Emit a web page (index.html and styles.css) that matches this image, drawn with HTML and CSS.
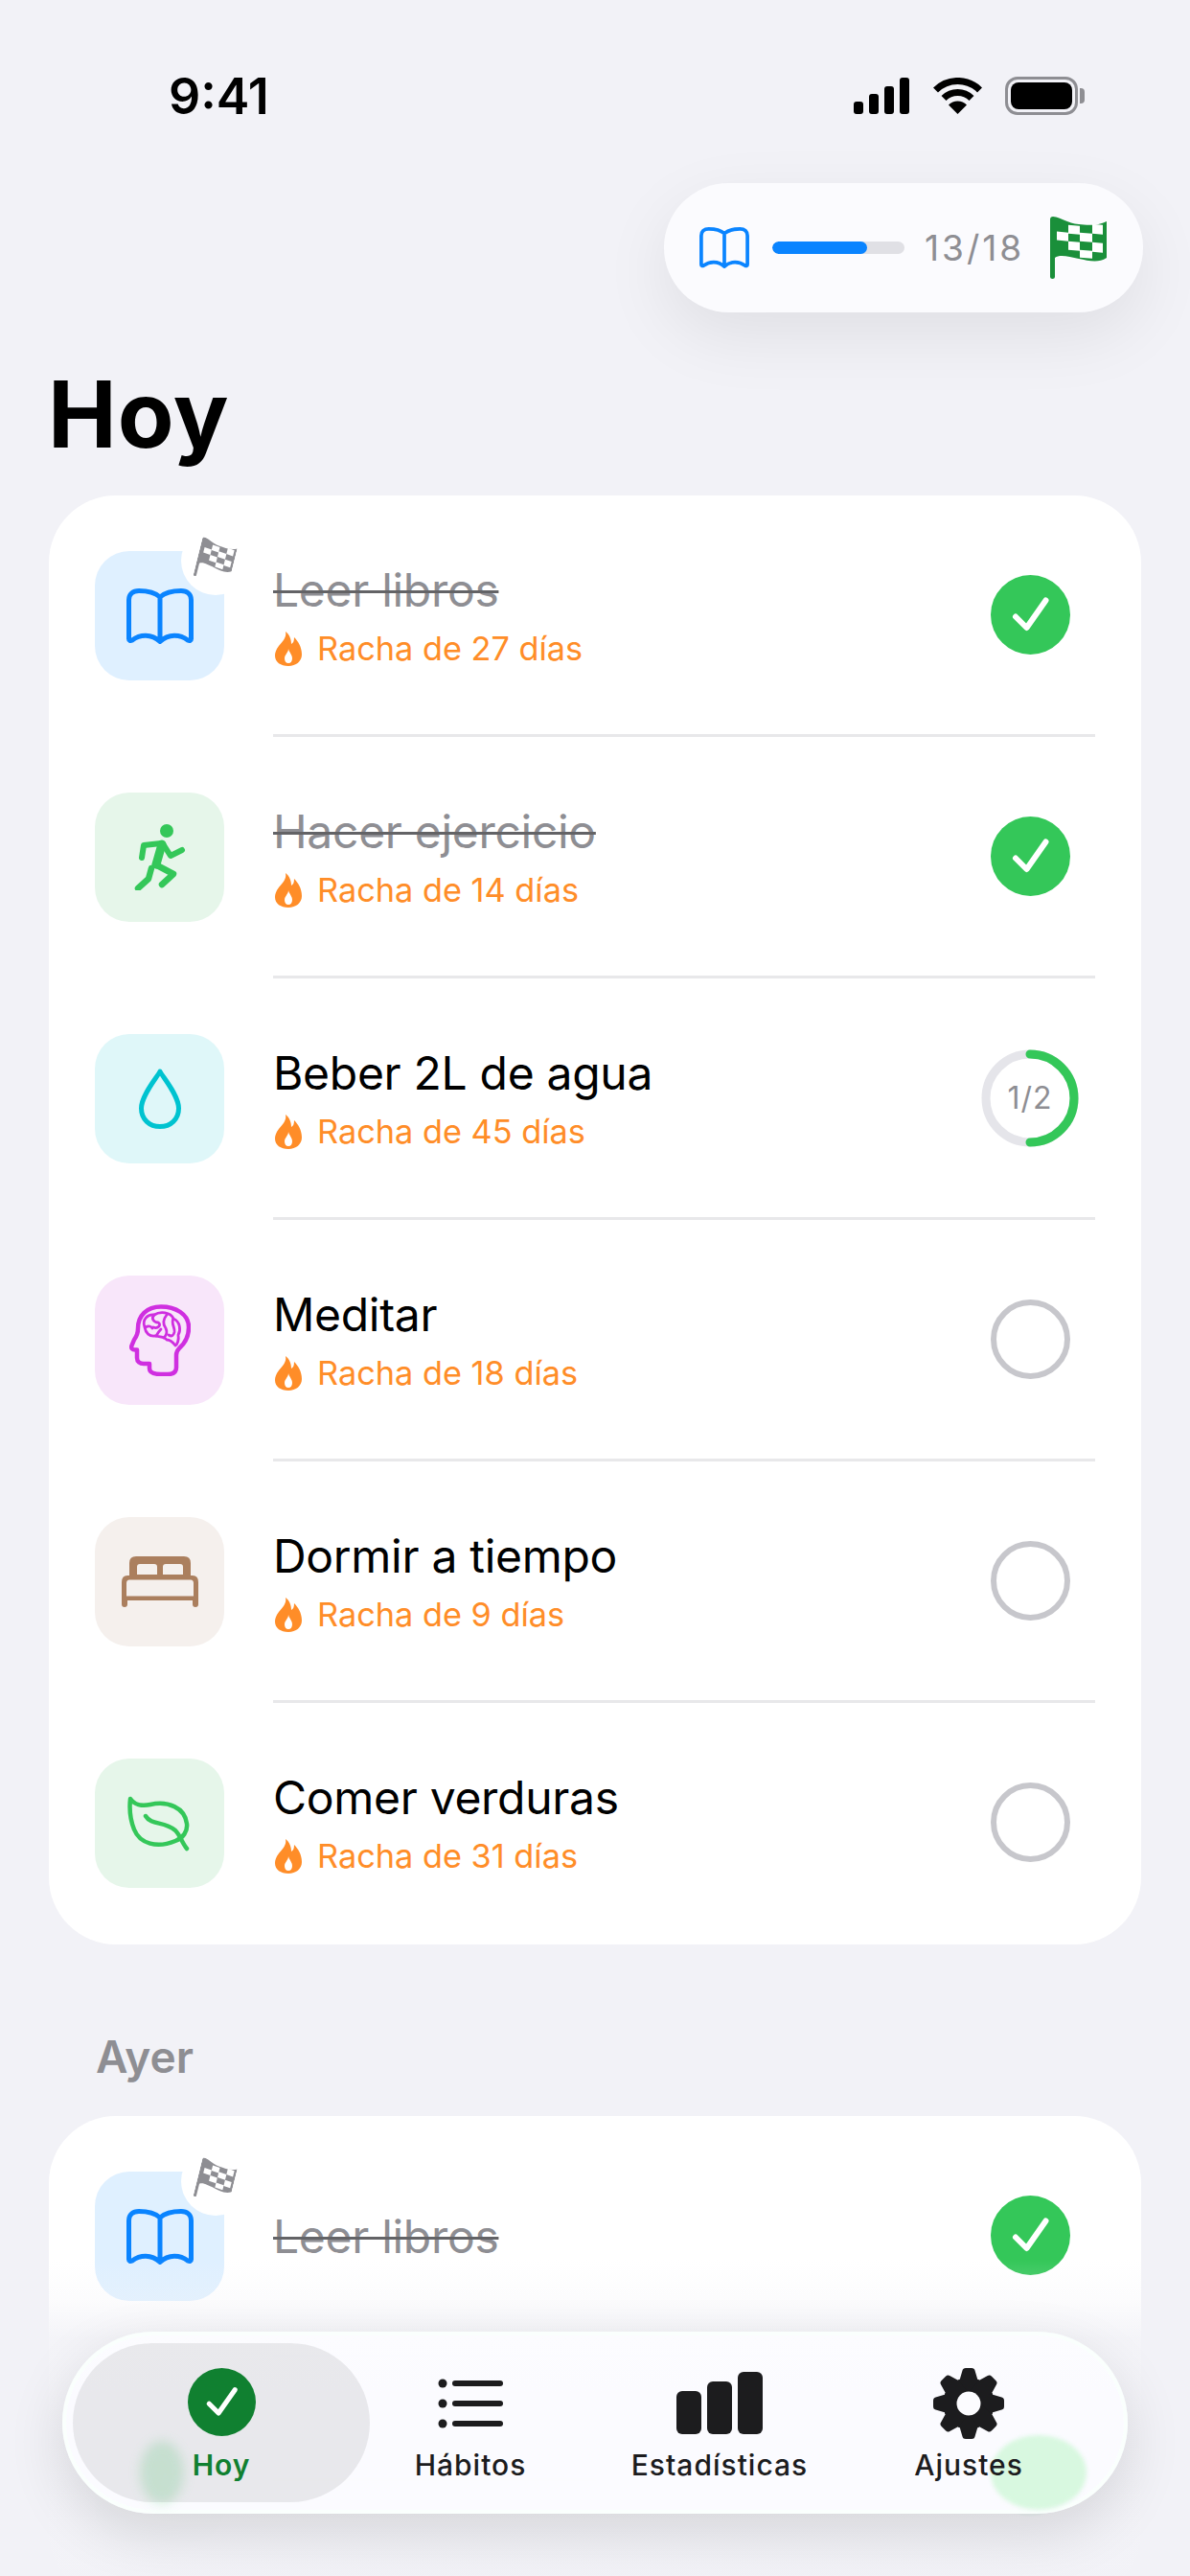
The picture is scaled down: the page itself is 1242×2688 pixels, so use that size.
FILE: index.html
```html
<!DOCTYPE html>
<html lang="es">
<head>
<meta charset="utf-8">
<title>Hoy</title>
<link rel="stylesheet" href="styles.css">
</head>
<body>

<svg class="icon-defs">
	<symbol id="i-book" viewBox="0 0 70 58">
		<path fill="none" stroke="currentColor" stroke-width="5" stroke-linejoin="round" d="M35 9C30 4.500 22 2.500 13 2.500 6.500 2.500 2.500 6 2.500 12V52.500C2.500 54.500 4 55 6 54 14 48 26 47 35 55.500 44 47 56 48 64 54 66 55 67.500 54.500 67.500 52.500V12C67.500 6 63.500 2.500 57 2.500 48 2.500 40 4.500 35 9ZM35 9V55"/>
	</symbol>
	<symbol id="i-flag" viewBox="0 0 59 65">
		<path fill="currentColor" d="M0 3Q0 0 3 0C12 1 18 7 30 8 38 9 50 10 59 5V43C50 49 40 46 30 44 20 42 10 39 5 43V63Q5 65 2.500 65 0 65 0 63Z"/>
		<g fill="#fff" transform="translate(0 1) skewY(5)">
			<rect x="19" y="6" width="12" height="9"/>
			<rect x="44" y="3" width="11" height="10"/>
			<rect x="7" y="14" width="12" height="9"/>
			<rect x="31" y="13" width="13" height="9"/>
			<rect x="19" y="23" width="12" height="9"/>
			<rect x="44" y="22" width="11" height="10"/>
			<rect x="31" y="31" width="13" height="8"/>
		</g>
	</symbol>
	<symbol id="i-flame" viewBox="0 0 28 36">
		<path fill="#ff8d28" d="M11 0C12.500 6 8 10 4 15 1 19 0 22 0 25 0 32 6 36 14 36 22 36 28 31 28 24 28 16 24 10 20 6 20 10 19 12 17 13 17 8 15 3 11 0Z"/>
		<path fill="#fff" d="M14 18C14 22 10 24 10 28 10 31 11.500 33 14 33 16.500 33 18 31 18 28 18 24 15 22 14 18Z"/>
	</symbol>
	<symbol id="i-run" viewBox="0 0 54 69">
		<circle cx="34" cy="7" r="7" fill="currentColor"/>
		<g fill="none" stroke="currentColor" stroke-linecap="round" stroke-linejoin="round">
			<path stroke-width="6" d="M8 35L10 22 28 20"/>
			<path stroke-width="6" d="M31 22L38 33 50 27"/>
			<path stroke-width="9" d="M29 21L23 42"/>
			<path stroke-width="6.500" d="M22 42L41 52 29 63"/>
			<path stroke-width="6.500" d="M18 46L15 57 4 67"/>
		</g>
	</symbol>
	<symbol id="i-check" viewBox="0 0 83 83">
		<circle cx="41.500" cy="41.500" r="41.500" fill="currentColor"/>
		<path fill="none" stroke="#fff" stroke-width="6" stroke-linecap="round" stroke-linejoin="round" d="M26 43.500L37.500 55 57.500 26.500"/>
	</symbol>
</svg>

<header class="status-bar">
	<span class="status-time">9:41</span>
	<div class="status-icons">
		<svg class="status-signal" viewBox="0 0 59 38">
			<rect x="0" y="25" width="10" height="13" rx="3"/>
			<rect x="16" y="17" width="10" height="21" rx="3"/>
			<rect x="32" y="9" width="10" height="29" rx="3"/>
			<rect x="48" y="0" width="10" height="38" rx="3"/>
		</svg>
		<svg class="status-wifi" viewBox="0 0 53 38">
			<path fill="none" stroke="#000" stroke-width="7" d="M3.500 13A32.500 32.500 0 0 1 49.500 13"/>
			<path fill="none" stroke="#000" stroke-width="7" d="M12 21.500A20.500 20.500 0 0 1 41 21.500"/>
			<path d="M26.500 38L17 28.500A13.400 13.400 0 0 1 36 28.500Z"/>
		</svg>
		<div class="status-battery"><span class="status-battery-fill"></span></div>
	</div>
</header>

<div class="goal-pill">
	<svg class="goal-book"><use href="#i-book"/></svg>
	<div class="goal-track"><div class="goal-fill" style="width:72%"></div></div>
	<span class="goal-count">13/18</span>
	<svg class="goal-flag"><use href="#i-flag"/></svg>
</div>

<h1 class="page-title">Hoy</h1>

<section class="card">
	<div class="row">
		<div class="tile tile-blue">
			<svg class="ic-book"><use href="#i-book"/></svg>
			<span class="tile-badge"><svg class="tile-badge-flag"><use href="#i-flag"/></svg></span>
		</div>
		<div class="row-main">
			<div class="row-text">
				<div class="row-title done">Leer libros</div>
				<div class="row-sub"><svg class="flame"><use href="#i-flame"/></svg>Racha de 27 días</div>
			</div>
			<div class="control"><svg class="check"><use href="#i-check"/></svg></div>
		</div>
	</div>
	<div class="row">
		<div class="tile tile-green">
			<svg class="ic-run"><use href="#i-run"/></svg>
		</div>
		<div class="row-main">
			<div class="row-text">
				<div class="row-title done">Hacer ejercicio</div>
				<div class="row-sub"><svg class="flame"><use href="#i-flame"/></svg>Racha de 14 días</div>
			</div>
			<div class="control"><svg class="check"><use href="#i-check"/></svg></div>
		</div>
	</div>
	<div class="row">
		<div class="tile tile-cyan">
			<svg class="ic-drop" viewBox="0 0 44 63"><path fill="none" stroke="currentColor" stroke-width="5" stroke-linejoin="round" d="M22 3C25 9 41.500 28 41.500 41.500 41.500 53 33 60.500 22 60.500 11 60.500 2.500 53 2.500 41.500 2.500 28 19 9 22 3Z"/></svg>
		</div>
		<div class="row-main">
			<div class="row-text">
				<div class="row-title">Beber 2L de agua</div>
				<div class="row-sub"><svg class="flame"><use href="#i-flame"/></svg>Racha de 45 días</div>
			</div>
			<div class="control">
				<div class="ring">
					<svg class="ring-svg" viewBox="0 0 102 102">
						<circle cx="51" cy="51" r="46" fill="none" stroke="#e5e5ea" stroke-width="9"/>
						<path fill="none" stroke="#34c759" stroke-width="9" stroke-linecap="round" d="M51 5A46 46 0 0 1 51 97"/>
					</svg>
					<span class="ring-label">1/2</span>
				</div>
			</div>
		</div>
	</div>
	<div class="row">
		<div class="tile tile-purple">
			<svg class="ic-head" viewBox="0 0 64 75">
				<g fill="none" stroke="currentColor" stroke-linecap="round" stroke-linejoin="round">
					<path stroke-width="4.500" d="M52 46C60 39 62 31 62 24 62 10 48 2.500 33 2.500 18 2.500 9 12 9 25 9 30 8 33 5 37L2.500 43C1.500 46 3 47.500 6 47.500H8V56C8 60 11 62 15 62H21V67C21 72 26 73 33 73H40C46 73 49 71 49 66V53C49 50 50 48 52 46Z"/>
					<path stroke-width="2.800" d="M16 24C13 16 19 10 26 11 32 7 43 8 46 15 53 18 54 27 51 32 52 37 50 42 48 43 45 39 42 37 39 37 36 33 31 34 27 33 21 34 17 30 16 24Z"/>
					<path stroke-width="2.800" d="M26 11C22 15 26 19 30 19 34 21 30 26 25 24M17 24C20 22 23 23 24 25M39 11C35 16 35 21 38 25 40 29 38 33 36 35M46 15C43 20 48 24 47 29 46 33 44 34 41 32M33 26C31 28 30 29 28 33"/>
				</g>
			</svg>
		</div>
		<div class="row-main">
			<div class="row-text">
				<div class="row-title">Meditar</div>
				<div class="row-sub"><svg class="flame"><use href="#i-flame"/></svg>Racha de 18 días</div>
			</div>
			<div class="control"><span class="circle-empty"></span></div>
		</div>
	</div>
	<div class="row">
		<div class="tile tile-brown">
			<svg class="ic-bed" viewBox="0 0 80 53">
				<path fill="currentColor" fill-rule="evenodd" d="M15 0H65Q72 0 72 7V21H8V7Q8 0 15 0ZM19 8Q16 8 16 11V19H37V11Q37 8 34 8ZM46 8Q43 8 43 11V19H64V11Q64 8 61 8Z"/>
				<path fill="currentColor" fill-rule="evenodd" d="M6 20H74Q80 20 80 27V50Q80 53 77 53 74 53 74 50V46H6V50Q6 53 3 53 0 53 0 50V27Q0 20 6 20ZM8 24.500Q5 24.500 5 28V41.500H75V28Q75 24.500 72 24.500Z"/>
			</svg>
		</div>
		<div class="row-main">
			<div class="row-text">
				<div class="row-title">Dormir a tiempo</div>
				<div class="row-sub"><svg class="flame"><use href="#i-flame"/></svg>Racha de 9 días</div>
			</div>
			<div class="control"><span class="circle-empty"></span></div>
		</div>
	</div>
	<div class="row">
		<div class="tile tile-green">
			<svg class="ic-leaf" viewBox="0 0 67 58">
				<g fill="none" stroke="currentColor" stroke-width="4.500" stroke-linecap="round" stroke-linejoin="round">
					<path d="M3 3C7 9 15 11 24 9 42 5 60 12 62 29 63 37 58 44 50 47 31 55 13 50 7 35 3 25 2 12 3 3Z"/>
					<path d="M19 21C25 31 38 26 50 36 55 41 57 49 62 55"/>
				</g>
			</svg>
		</div>
		<div class="row-main">
			<div class="row-text">
				<div class="row-title">Comer verduras</div>
				<div class="row-sub"><svg class="flame"><use href="#i-flame"/></svg>Racha de 31 días</div>
			</div>
			<div class="control"><span class="circle-empty"></span></div>
		</div>
	</div>
</section>

<h2 class="section-title">Ayer</h2>

<section class="card">
	<div class="row">
		<div class="tile tile-blue">
			<svg class="ic-book"><use href="#i-book"/></svg>
			<span class="tile-badge"><svg class="tile-badge-flag"><use href="#i-flag"/></svg></span>
		</div>
		<div class="row-main">
			<div class="row-text">
				<div class="row-title done">Leer libros</div>
			</div>
			<div class="control"><svg class="check"><use href="#i-check"/></svg></div>
		</div>
	</div>
	<div class="row">
		<div class="tile tile-green">
			<svg class="ic-run"><use href="#i-run"/></svg>
		</div>
		<div class="row-main">
			<div class="row-text">
				<div class="row-title done">Hacer ejercicio</div>
			</div>
			<div class="control"><svg class="check"><use href="#i-check"/></svg></div>
		</div>
	</div>
</section>

<div class="bottom-fade"></div>

<nav class="tabbar">
	<span class="ghost ghost-run"></span>
	<span class="ghost ghost-check"></span>
	<div class="tab tab-active">
		<svg class="tab-icon tab-check"><use href="#i-check"/></svg>
		<span>Hoy</span>
	</div>
	<div class="tab">
		<svg class="tab-icon" viewBox="0 0 74 74">
			<circle cx="8" cy="16" r="4.500"/><circle cx="8" cy="37" r="4.500"/><circle cx="8" cy="58" r="4.500"/>
			<rect x="18" y="13" width="53" height="6" rx="3"/><rect x="18" y="34" width="53" height="6" rx="3"/><rect x="18" y="55" width="53" height="6" rx="3"/>
		</svg>
		<span>Hábitos</span>
	</div>
	<div class="tab">
		<svg class="tab-icon tab-bars" viewBox="0 0 90 65">
			<rect x="0" y="20" width="26" height="45" rx="6"/>
			<rect x="32" y="10" width="26" height="55" rx="6"/>
			<rect x="64" y="0" width="26" height="65" rx="6"/>
		</svg>
		<span>Estadísticas</span>
	</div>
	<div class="tab">
		<svg class="tab-icon" viewBox="-37 -37 74 74">
			<circle r="27"/>
			<path d="M-9 -26L-6.500 -34.500Q-6 -37 -3 -37H3Q6 -37 6.500 -34.500L9 -26V26L6.500 34.500Q6 37 3 37H-3Q-6 37 -6.500 34.500L-9 26Z"/>
			<path transform="rotate(45)" d="M-9 -26L-6.500 -34.500Q-6 -37 -3 -37H3Q6 -37 6.500 -34.500L9 -26V26L6.500 34.500Q6 37 3 37H-3Q-6 37 -6.500 34.500L-9 26Z"/>
			<path transform="rotate(90)" d="M-9 -26L-6.500 -34.500Q-6 -37 -3 -37H3Q6 -37 6.500 -34.500L9 -26V26L6.500 34.500Q6 37 3 37H-3Q-6 37 -6.500 34.500L-9 26Z"/>
			<path transform="rotate(135)" d="M-9 -26L-6.500 -34.500Q-6 -37 -3 -37H3Q6 -37 6.500 -34.500L9 -26V26L6.500 34.500Q6 37 3 37H-3Q-6 37 -6.500 34.500L-9 26Z"/>
			<circle r="12.500" fill="#fcfcff"/>
		</svg>
		<span>Ajustes</span>
	</div>
</nav>

</body>
</html>
```

FILE: styles.css
```css
html, body {
	margin: 0;
	height: 2688px;
	overflow: hidden;
}
body {
	position: relative;
	background-color: #f2f2f7;
	font-family: Inter, "Liberation Sans", sans-serif;
	color: #000;
}
.icon-defs {
	display: none;
}

/* status bar */
.status-bar {
	display: flex;
	justify-content: space-between;
	align-items: center;
	height: 40px;
	padding: 80px 109px 0 176px;
}
.status-time {
	font-size: 52px;
	font-weight: 600;
	line-height: 40px;
	margin-top: 2px;
}
.status-icons {
	display: flex;
	align-items: center;
}
.status-signal {
	width: 59px;
	height: 38px;
	margin-right: 23px;
}
.status-wifi {
	width: 53px;
	height: 38px;
	margin-right: 23px;
}
.status-battery {
	position: relative;
	box-sizing: border-box;
	width: 76px;
	height: 40px;
	padding: 3px;
	border: 3px solid #8e8e93;
	border-radius: 13px;
	margin-right: 8px;
}
.status-battery::after {
	content: "";
	position: absolute;
	left: 75px;
	top: 9px;
	width: 5px;
	height: 16px;
	border-radius: 0 4px 4px 0;
	background-color: #8e8e93;
}
.status-battery-fill {
	display: block;
	height: 100%;
	border-radius: 8px;
	background-color: #000;
}

/* goal pill */
.goal-pill {
	display: flex;
	align-items: center;
	width: 500px;
	height: 135px;
	box-sizing: border-box;
	padding-left: 37px;
	margin: 71px 49px 0 auto;
	border-radius: 68px;
	background-color: #fbfbfe;
	box-shadow: 0 24px 70px rgba(0, 0, 0, 0.08);
}
.goal-book {
	width: 52px;
	height: 43px;
	color: #0a84ff;
}
.goal-track {
	width: 138px;
	height: 13px;
	margin-left: 24px;
	border-radius: 7px;
	background-color: #e0e0e5;
	overflow: hidden;
}
.goal-fill {
	height: 100%;
	border-radius: 7px;
	background-color: #0a84ff;
}
.goal-count {
	width: 101px;
	margin-left: 21px;
	font-size: 37px;
	letter-spacing: 3px;
	color: #8e8e93;
	white-space: nowrap;
}
.goal-flag {
	width: 59px;
	height: 65px;
	margin-left: 30px;
	color: #1a8f3a;
}

/* titles */
.page-title {
	margin: 51px 0 0 50px;
	height: 140px;
	font-size: 96px;
	font-weight: 700;
	line-height: 110px;
	letter-spacing: 1px;
}
.section-title {
	margin: 92px 0 0 100px;
	height: 87px;
	font-size: 46px;
	font-weight: 600;
	line-height: 50px;
	color: #8e8e93;
}

/* cards and rows */
.card {
	margin: 0 51px;
	border-radius: 70px;
	background-color: #fff;
}
.row {
	display: flex;
	gap: 51px;
	padding: 0 48px;
}
.row-main {
	flex: 1;
	display: flex;
	align-items: center;
	border-bottom: 3px solid #e8e8ea;
}
.row:last-child .row-main {
	border-bottom-color: transparent;
}
.row-text {
	flex: 1;
	padding-top: 2px;
}
.row-title {
	font-size: 48px;
	line-height: 56px;
	letter-spacing: -0.3px;
}
.row-title.done {
	color: #8e8e93;
	text-decoration: line-through;
	text-decoration-color: #636366;
	text-decoration-thickness: 3px;
}
.row-sub {
	display: flex;
	align-items: center;
	margin-top: 13px;
	font-size: 34.300px;
	line-height: 40px;
	color: #ff8d28;
}
.flame {
	width: 28px;
	height: 36px;
	margin: 0 16px 0 2px;
}

/* icon tiles */
.tile {
	position: relative;
	display: flex;
	align-items: center;
	justify-content: center;
	flex: none;
	width: 135px;
	height: 135px;
	margin: 58px 0 59px;
	border-radius: 36px;
}
.tile-blue {
	background-color: #dff0ff;
	color: #0a84ff;
}
.tile-green {
	background-color: #e6f6ea;
	color: #34c759;
}
.tile-cyan {
	background-color: #dff7f9;
	color: #00c3d0;
}
.tile-purple {
	background-color: #f8e6fa;
	color: #cf2fe0;
}
.tile-brown {
	background-color: #f5f0ed;
	color: #ab7f5e;
}
.tile-badge {
	position: absolute;
	top: -26px;
	right: -27px;
	display: flex;
	align-items: center;
	justify-content: center;
	width: 72px;
	height: 72px;
	border-radius: 50%;
	background-color: #fff;
	color: #8e8e93;
}
.tile-badge-flag {
	width: 38px;
	height: 42px;
	transform: rotate(14deg);
}
.ic-book {
	width: 70px;
	height: 58px;
}
.ic-run {
	width: 54px;
	height: 69px;
}
.ic-drop {
	width: 44px;
	height: 63px;
}
.ic-head {
	width: 64px;
	height: 75px;
}
.ic-bed {
	width: 80px;
	height: 53px;
}
.ic-leaf {
	width: 67px;
	height: 58px;
}

/* right side controls */
.control {
	display: flex;
	align-items: center;
	justify-content: center;
	flex: none;
	width: 102px;
	height: 102px;
	margin-right: 17px;
}
.check {
	width: 83px;
	height: 83px;
	color: #34c759;
}
.circle-empty {
	box-sizing: border-box;
	width: 83px;
	height: 83px;
	border: 6px solid #c7c7cc;
	border-radius: 50%;
}
.ring {
	position: relative;
	display: flex;
	align-items: center;
	justify-content: center;
	width: 102px;
	height: 102px;
}
.ring-svg {
	position: absolute;
	left: 0;
	top: 0;
	width: 102px;
	height: 102px;
}
.ring-label {
	font-size: 32px;
	letter-spacing: 1px;
	color: #8e8e93;
}

/* bottom fade and tab bar */
.bottom-fade {
	position: absolute;
	left: 0;
	right: 0;
	bottom: 0;
	height: 330px;
	background: linear-gradient(to bottom, rgba(242, 242, 247, 0) 0, rgba(242, 242, 247, 0.25) 42px, rgba(242, 242, 247, 0.85) 82px, rgba(242, 242, 247, 0.97) 172px);
}
.tabbar {
	position: absolute;
	left: 65px;
	top: 2433px;
	box-sizing: border-box;
	display: grid;
	grid-template-columns: repeat(4, 260px);
	width: 1112px;
	height: 190px;
	padding: 8px 0 8px 32px;
	border: 4px solid rgba(250, 255, 253, 0.95);
	border-radius: 95px;
	background-color: rgba(252, 252, 255, 0.92);
	box-shadow: 0 20px 60px rgba(0, 0, 0, 0.12);
}
.ghost {
	position: absolute;
	border-radius: 50%;
}
.ghost-run {
	left: 77px;
	top: 110px;
	width: 46px;
	height: 66px;
	background-color: rgba(52, 199, 89, 0.18);
	filter: blur(6px);
}
.ghost-check {
	left: 965px;
	top: 104px;
	width: 100px;
	height: 78px;
	background-color: #d8f8e0;
	filter: blur(2px);
}
.tab {
	position: relative;
	display: flex;
	flex-direction: column;
	align-items: center;
	padding-top: 26px;
	font-size: 30px;
	font-weight: 500;
	letter-spacing: 1px;
	line-height: 36px;
	color: #1c1c1e;
}
.tab-icon {
	width: 74px;
	height: 74px;
	margin-bottom: 9px;
	fill: #1c1c1e;
}
.tab-bars {
	width: 90px;
	height: 65px;
	margin-top: 4px;
	margin-bottom: 14px;
}
.tab-active {
	margin: 0 -25px;
	border-radius: 83px;
	background-color: rgba(0, 0, 0, 0.075);
	font-weight: 600;
	color: #108030;
}
.tab-check {
	width: 71px;
	height: 71px;
	margin-bottom: 12px;
	color: #108030;
}
```
